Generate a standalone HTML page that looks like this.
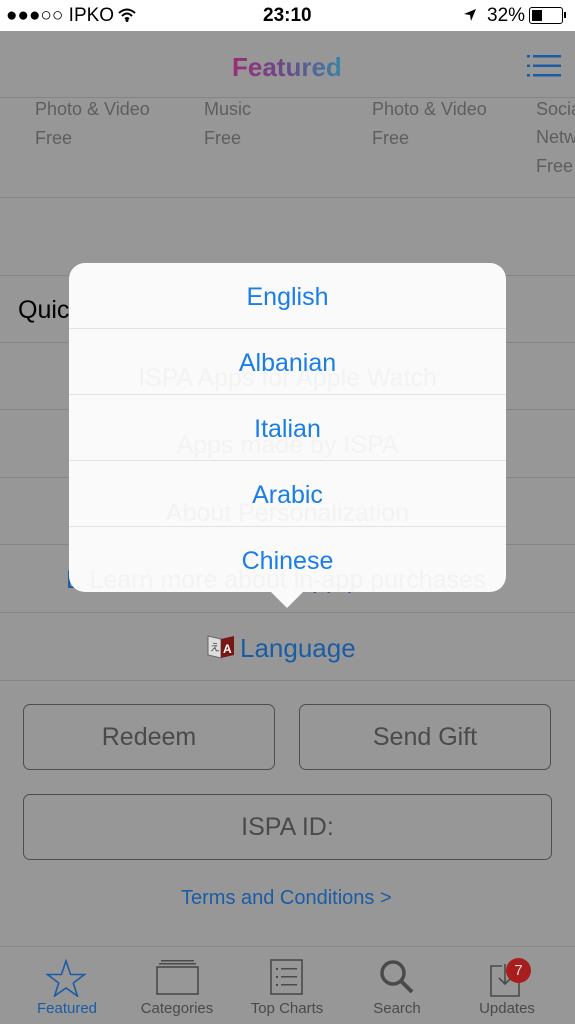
<!DOCTYPE html>
<html><head><meta charset="utf-8"><style>
*{margin:0;padding:0;box-sizing:border-box}
body{width:575px;height:1024px;position:relative;overflow:hidden;background:#979797;font-family:"Liberation Sans",sans-serif}
.a{position:absolute}
.line{position:absolute;left:0;width:575px;height:1px;background:#858585}
.t{position:absolute;white-space:nowrap}
.g{color:#5e5e5e;font-size:18px}
.btn{position:absolute;border:1.5px solid #4e4e4e;border-radius:7px;color:#4a4a4a;font-size:25px;display:flex;align-items:center;justify-content:center}
.pop{position:absolute;left:69px;top:263px;width:437px;height:329px;background:#fafafa;border-radius:16px;overflow:hidden}
.row{height:66px;border-bottom:1px solid #e2e2e2;display:flex;align-items:center;justify-content:center;color:#1a7ee6;font-size:25px;position:relative;padding-top:3px}
.ghost{position:absolute;width:575px;left:-69px;text-align:center;color:#f3f3f3;font-size:25px}
.tab{position:absolute;top:1000px;font-size:15px;color:#4a4a4a;text-align:center;width:100px}
</style></head><body>
<div class="a" style="left:0;top:0;width:575px;height:31px;background:#fff"></div>
<div class="t" style="left:6px;top:5px;font-size:19px;color:#000">●●●○○ IPKO</div>
<svg class="a" style="left:118px;top:8px" width="18" height="14" viewBox="0 0 18 14"><path d="M1 5Q9-2 17 5M4 8Q9 3 14 8M7 11Q9 9 11 11" stroke="#000" stroke-width="2" fill="none"/><circle cx="9" cy="12.5" r="1.5"/></svg>
<div class="t" style="left:263px;top:5px;font-size:19px;font-weight:bold">23:10</div>
<svg class="a" style="left:463px;top:8px" width="14" height="14" viewBox="0 0 14 14"><path d="M13 1L1 6L7 7L8 13Z" fill="#000"/></svg>
<div class="t" style="left:487px;top:5px;font-size:19px">32%</div>
<div class="a" style="left:529px;top:7px;width:34px;height:17px;border:1.5px solid #000;border-radius:3px"><div style="margin:1.5px;width:10px;height:11px;background:#000"></div></div>
<div class="a" style="left:564px;top:12px;width:2px;height:6px;background:#000"></div>

<div class="t" style="left:232px;top:52px;font-size:26px;font-weight:bold;background:linear-gradient(90deg,#9a2c78,#6a4a88,#3a84a8);-webkit-background-clip:text;color:transparent">Featured</div>
<svg class="a" style="left:527px;top:54px" width="34" height="24"><g fill="#1b5ca6"><rect x="0" y="1" width="3" height="2.5"/><rect x="6" y="1" width="28" height="2.5"/><rect x="0" y="10.5" width="3" height="2.5"/><rect x="6" y="10.5" width="28" height="2.5"/><rect x="0" y="20" width="3" height="2.5"/><rect x="6" y="20" width="28" height="2.5"/></g></svg>
<div class="line" style="top:97px"></div>
<div class="t g" style="left:35px;top:99px">Photo &amp; Video</div><div class="t g" style="left:35px;top:128px">Free</div>
<div class="t g" style="left:204px;top:99px">Music</div><div class="t g" style="left:204px;top:128px">Free</div>
<div class="t g" style="left:372px;top:99px">Photo &amp; Video</div><div class="t g" style="left:372px;top:128px">Free</div>
<div class="t g" style="left:536px;top:99px">Social</div><div class="t g" style="left:536px;top:127px">Network</div><div class="t g" style="left:536px;top:156px">Free</div>
<div class="line" style="top:197px"></div>
<div class="line" style="top:275px"></div>
<div class="t" style="left:18px;top:296px;font-size:25px;color:#000">Quick links</div>
<div class="line" style="top:342px"></div>
<div class="line" style="top:409px"></div>
<div class="line" style="top:477px"></div>
<div class="line" style="top:544px"></div>
<div class="t" style="left:66px;top:566px;font-size:25px;color:#1b5ca6">Learn more about in-app purchases</div>
<div class="line" style="top:612px"></div>

<div class="pop">
<div class="ghost" style="top:101px">ISPA Apps for Apple Watch</div>
<div class="ghost" style="top:168px">Apps made by ISPA</div>
<div class="ghost" style="top:236px">About Personalization</div>
<div class="ghost" style="top:303px">Learn more about in-app purchases</div>
<div class="row">English</div><div class="row">Albanian</div><div class="row">Italian</div><div class="row">Arabic</div><div class="row" style="border:0">Chinese</div>
</div>
<svg class="a" style="left:270px;top:591px" width="34" height="18"><path d="M0 0L17 17L34 0Z" fill="#fafafa"/></svg>

<svg class="a" style="left:206px;top:632px" width="30" height="30" viewBox="0 0 30 30"><path d="M2 4L15 7L15 26L2 23Z" fill="#ddd" stroke="#666"/><path d="M15 7L28 4L28 23L15 26Z" fill="#7a1515"/><text x="17" y="21" font-size="12" fill="#fff" font-weight="bold" font-family="Liberation Sans">A</text><text x="4" y="19" font-size="10" fill="#444" font-family="Liberation Sans">え</text></svg>
<div class="t" style="left:240px;top:633px;font-size:26px;color:#1b5ca6">Language</div>
<div class="line" style="top:680px"></div>
<div class="btn" style="left:23px;top:704px;width:252px;height:66px">Redeem</div>
<div class="btn" style="left:299px;top:704px;width:252px;height:66px">Send Gift</div>
<div class="btn" style="left:23px;top:794px;width:529px;height:66px">ISPA ID:</div>
<div class="t" style="left:181px;top:887px;font-size:20px;color:#1b5ca6">Terms and Conditions &gt;</div>
<div class="line" style="top:946px;background:#888"></div>

<svg class="a" style="left:45px;top:959px" width="42" height="38" viewBox="0 0 42 38"><path d="M21 2L25.6 15.5L39.5 15.5L28.3 24L32.4 37L21 29L9.6 37L13.7 24L2.5 15.5L16.4 15.5Z" fill="none" stroke="#1b5ca6" stroke-width="1.6"/></svg>
<svg class="a" style="left:156px;top:959px" width="44" height="36"><rect x="5" y="1" width="33" height="1.5" fill="#4a4a4a"/><rect x="3" y="4" width="37" height="1.5" fill="#4a4a4a"/><rect x="1" y="8" width="41" height="27" fill="none" stroke="#4a4a4a" stroke-width="1.6"/></svg>
<svg class="a" style="left:270px;top:959px" width="34" height="36"><rect x="1" y="1" width="31" height="34" fill="none" stroke="#4a4a4a" stroke-width="1.6"/><g fill="#4a4a4a"><rect x="6" y="9" width="2" height="2"/><rect x="11" y="9" width="16" height="1.5"/><rect x="6" y="17" width="2" height="2"/><rect x="11" y="17" width="16" height="1.5"/><rect x="6" y="25" width="2" height="2"/><rect x="11" y="25" width="16" height="1.5"/></g></svg>
<svg class="a" style="left:378px;top:958px" width="38" height="38"><circle cx="15" cy="15" r="11" fill="none" stroke="#4a4a4a" stroke-width="3.5"/><path d="M23 23L34 34" stroke="#4a4a4a" stroke-width="4"/></svg>
<svg class="a" style="left:490px;top:962px" width="34" height="36"><path d="M12 4L1 4L1 34L29 34L29 18" fill="none" stroke="#4a4a4a" stroke-width="1.6"/><path d="M15 2L15 22M9 16L15 22L21 16" fill="none" stroke="#4a4a4a" stroke-width="1.6"/></svg>
<div class="a" style="left:506px;top:958px;width:25px;height:25px;border-radius:50%;background:#a81d1d;color:#ddd;font-size:15px;text-align:center;line-height:25px">7</div>
<div class="tab" style="left:17px;color:#1b5ca6">Featured</div>
<div class="tab" style="left:127px">Categories</div>
<div class="tab" style="left:237px">Top Charts</div>
<div class="tab" style="left:347px">Search</div>
<div class="tab" style="left:457px">Updates</div>
</body></html>
